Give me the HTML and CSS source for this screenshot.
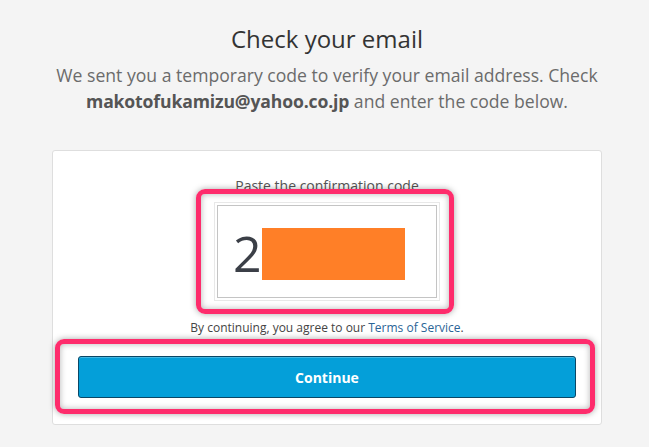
FILE: index.html
```html
<!DOCTYPE html>
<html lang="en">
<head>
<meta charset="utf-8">
<title>Check your email</title>
<link rel="stylesheet" href="styles.css">
</head>
<body>
<main class="page">
  <h1 class="title">Check your email</h1>
  <p class="lead">We sent you a temporary code to verify your email address. Check <strong>makotofukamizu@yahoo.co.jp</strong> and enter the code below.</p>
  <section class="card">
    <label class="label" for="code">Paste the confirmation code</label>
    <div class="code-wrap">
      <div class="code-box" id="code">2<span class="redact"></span></div>
      <span class="mark mark-code"></span>
    </div>
    <p class="terms">By continuing, you agree to our <a href="#" class="link">Terms of Service</a>.</p>
    <div class="btn-wrap">
      <button class="btn" type="button">Continue</button>
      <span class="mark mark-btn"></span>
    </div>
  </section>
</main>
</body>
</html>
```

FILE: styles.css
```css
html, body {
  margin: 0;
  padding: 0;
  background: #f4f4f4;
  font-family: "Open Sans", "Noto Sans", sans-serif;
}

.page {
  width: 550px;
  margin: 0 0 0 52px;
  padding-top: 23px;
  display: flex;
  flex-direction: column;
}

.title {
  margin: 0;
  font-size: 24px;
  line-height: 32px;
  font-weight: 400;
  color: #333;
  text-align: center;
}

.lead {
  margin: 7px -30px 0;
  font-size: 17.6px;
  line-height: 26px;
  color: #6b6b6b;
  text-align: center;
}

.lead strong {
  color: #555;
  font-weight: 700;
  letter-spacing: -0.15px;
}

.card {
  margin-top: 36px;
  background: #fff;
  border: 1px solid #dedede;
  border-radius: 3px;
  padding: 25px 25px 26px;
  display: flex;
  flex-direction: column;
  align-items: center;
}

.label {
  font-size: 14px;
  line-height: 20px;
  color: #555;
}

.code-wrap {
  position: relative;
  margin-top: 9px;
}

.code-box {
  box-sizing: border-box;
  width: 220px;
  height: 93px;
  border: 1px solid #c4c4c4;
  outline: 1px solid #e8e8e8;
  outline-offset: 2px;
  padding: 2px 0 0 15px;
  display: flex;
  align-items: center;
  font-size: 50px;
  line-height: 1;
  color: #3b3f47;
  position: relative;
}

.redact {
  position: absolute;
  left: 44px;
  top: 22px;
  width: 143px;
  height: 52px;
  background: #ff7f27;
}

.mark {
  position: absolute;
  border: 5px solid #fe2c6c;
  border-radius: 9px;
  box-shadow: 0 0 6px rgba(0, 0, 0, 0.35), inset 0 0 6px rgba(0, 0, 0, 0.3);
  pointer-events: none;
}

.mark-code {
  left: -21px;
  right: -17px;
  top: -16px;
  bottom: -16px;
}

.terms {
  margin: 21px 0 0;
  font-size: 12px;
  line-height: 18px;
  color: #444;
}

.link {
  color: #2a6496;
  text-decoration: none;
}

.btn-wrap {
  position: relative;
  margin-top: 19px;
  align-self: stretch;
  display: flex;
}

.btn {
  flex: 1;
  height: 42px;
  background: #049fd9;
  border: 1px solid #0a4766;
  border-radius: 3px;
  box-shadow: inset 0 1px 0 rgba(255, 255, 255, 0.25);
  color: #fff;
  font-family: "Open Sans", "Noto Sans", sans-serif;
  font-size: 14px;
  font-weight: 700;
}

.mark-btn {
  left: -23px;
  right: -19px;
  top: -17px;
  bottom: -16px;
}
```
